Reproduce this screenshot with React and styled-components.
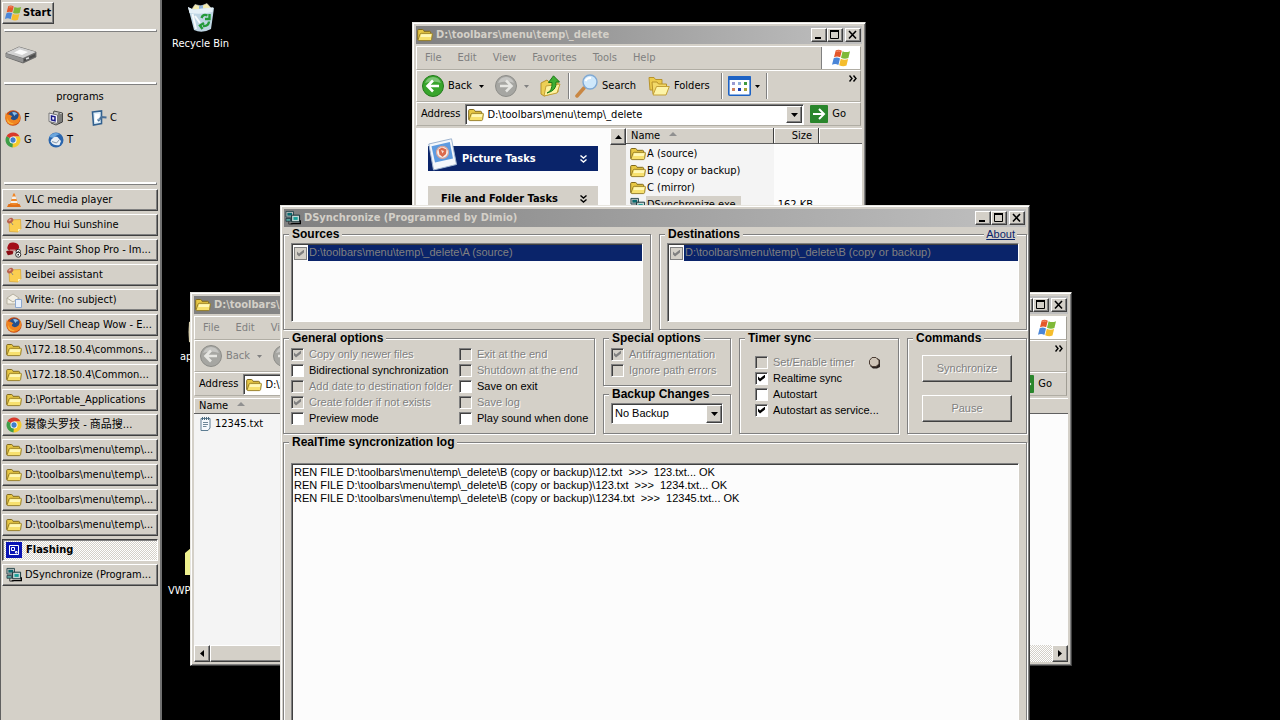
import styled, { createGlobalStyle, css } from 'styled-components';

const FACE = '#d4d0c8';
const NAVY = '#0a246a';
const UI_FONT = "Tahoma, 'DejaVu Sans Condensed', 'Noto Sans CJK SC', sans-serif";
const DIALOG_FONT = "'Liberation Sans', Arial, sans-serif";

const GlobalStyle = createGlobalStyle`
    * { box-sizing: border-box; }
    body { margin: 0; background: #000; overflow: hidden; }
    button, input, select, fieldset, legend { font: inherit; color: inherit; margin: 0; }
`;

const raised = css`
    border: 1px solid;
    border-color: #fff #404040 #404040 #fff;
    box-shadow: inset -1px -1px 0 #808080;
`;

const sunken = css`
    border: 1px solid;
    border-color: #808080 #fff #fff #808080;
    box-shadow: inset 1px 1px 0 #404040;
`;

const dither = css`
    background: repeating-conic-gradient(#fff 0 25%, ${FACE} 0 50%) 0 0 / 2px 2px;
`;

/* ---------- desktop ---------- */

const Desktop = styled.div`
    position: relative;
    display: flex;
    height: 100vh;
    overflow: hidden;
    background: #000;
    font: 11px/14px ${UI_FONT};
    color: #000;
`;

const Shortcut = styled.div`
    position: absolute;
    left: ${(p) => p.$x}px;
    top: ${(p) => p.$y}px;
    display: flex;
    flex-direction: column;
    align-items: ${(p) => p.$align || 'center'};
    gap: 4px;
    color: #fff;
    white-space: nowrap;

    svg { margin-left: ${(p) => p.$indent || 0}px; }
`;

/* ---------- taskbar ---------- */

const Taskbar = styled.aside`
    display: flex;
    flex-direction: column;
    flex: none;
    width: 162px;
    padding: 2px 2px 0 1px;
    background: ${FACE};
    border-left: 1px solid #606060;
    border-right: 2px solid #707070;
`;

const StartButton = styled.button`
    ${raised}
    display: flex;
    align-items: center;
    align-self: flex-start;
    gap: 1px;
    height: 22px;
    padding: 0 2px 0 1px;
    background: ${FACE};
    font-weight: bold;
`;

const Divider = styled.hr`
    width: 153px;
    height: 3px;
    margin: 5px 0 0 2px;
    border: 1px solid;
    border-color: #fff #808080 #808080 #fff;
    background: #fff;
`;

const DriveArea = styled.div`
    height: 45px;
    padding: 14px 0 0 3px;
`;

const Programs = styled.section`
    height: 92px;
    padding-top: 5px;
`;

const ProgramsTitle = styled.h2`
    margin: 0 0 3px;
    font: inherit;
    text-align: center;
`;

const ProgramGrid = styled.div`
    display: grid;
    grid-template-columns: 43px 43px 43px;
    padding-left: 3px;
`;

const ProgramLink = styled.a`
    display: flex;
    align-items: center;
    gap: 3px;
    height: 22px;
    color: inherit;
    text-decoration: none;
`;

const TaskList = styled.nav`
    display: flex;
    flex-direction: column;
    gap: 3px;
    margin-top: 4px;
`;

const TaskButton = styled.button`
    ${raised}
    display: flex;
    align-items: center;
    gap: 3px;
    height: 22px;
    padding: 0 3px;
    background: ${FACE};
    text-align: left;
    white-space: nowrap;
    overflow: hidden;

    svg { flex: none; }

    ${(p) => p.$active && css`
        ${dither}
        border-color: #404040 #fff #fff #404040;
        box-shadow: inset 1px 1px 0 #808080;
        font-weight: bold;
        gap: 4px;
    `}
`;

/* ---------- window chrome ---------- */

const WindowFrame = styled.section`
    position: absolute;
    left: ${(p) => p.$x}px;
    top: ${(p) => p.$y}px;
    width: ${(p) => p.$w}px;
    height: ${(p) => p.$h}px;
    display: flex;
    flex-direction: column;
    padding: 3px;
    background: ${FACE};
    border: 1px solid;
    border-color: #e8e6e0 #404040 #404040 #e8e6e0;
    box-shadow: inset 1px 1px 0 #fff, inset -1px -1px 0 #808080;
`;

const TitleBar = styled.header`
    display: flex;
    align-items: center;
    flex: none;
    gap: 3px;
    height: 18px;
    padding: 0 1px;
    background: linear-gradient(to right, #808080, #c0c0c0);
    color: ${FACE};
`;

const TitleText = styled.h1`
    flex: 1;
    margin: 0;
    font: bold 11px/14px ${UI_FONT};
    white-space: nowrap;
    overflow: hidden;
`;

const TitleButtons = styled.div`
    display: flex;

    button:last-child { margin-left: 2px; }
`;

const TitleButton = styled.button`
    ${raised}
    display: flex;
    width: 16px;
    height: 14px;
    padding: 0;
    background: ${FACE};
`;

/* ---------- explorer ---------- */

const BarStack = styled.div`
    flex: none;
    margin-top: 2px;
    padding-right: 1px;
`;

const Bar = styled.div`
    display: flex;
    align-items: center;
    height: ${(p) => p.$h}px;
    padding-left: ${(p) => p.$indent || 0}px;
    border: 1px solid;
    border-color: #fff #a09d94 #b0ada4 #fff;
`;

const MenuItems = styled.nav`
    display: flex;
    flex: 1;
    gap: 16px;
    color: #808080;
`;

const FlagBox = styled.div`
    display: flex;
    align-items: center;
    justify-content: center;
    align-self: stretch;
    width: 39px;
    background: #fff;
    border-left: 1px solid #808080;
`;

const ToolButton = styled.button`
    display: flex;
    align-items: center;
    gap: 4px;
    padding: 0;
    margin-right: ${(p) => p.$after || 0}px;
    border: 0;
    background: none;

    &:disabled { color: #808080; }
`;

const ToolArrow = styled.svg`
    margin-left: ${(p) => (p.$wide ? 3 : 0)}px;
    fill: currentColor;
`;

const ToolSplit = styled.span`
    width: 2px;
    height: 26px;
    margin-right: 5px;
    border-left: 1px solid #808080;
    border-right: 1px solid #fff;
`;

const Chevron = styled.button`
    align-self: flex-start;
    margin-left: auto;
    padding: 1px 3px 0 0;
    border: 0;
    background: none;
`;

const AddressBox = styled.div`
    ${sunken}
    display: flex;
    align-items: center;
    flex: 1;
    height: 21px;
    margin: 0 6px 0 5px;
    padding: 2px 1px 1px 2px;
    background: #fff;

    input {
        flex: 1;
        min-width: 0;
        padding: 1px 0 0 3px;
        border: 0;
        outline: 0;
        background: none;
    }
`;

const DropButton = styled.button`
    ${raised}
    display: flex;
    align-items: center;
    justify-content: center;
    width: 16px;
    height: 17px;
    padding: 0;
    background: ${FACE};
`;

const GoButton = styled.button`
    display: flex;
    align-items: center;
    gap: 4px;
    padding: 0 14px 0 0;
    border: 0;
    background: none;
`;

const ExplorerBody = styled.div`
    display: flex;
    flex: 1;
    min-height: 0;
    margin-top: 2px;
`;

const Sidebar = styled.aside`
    display: flex;
    flex-direction: column;
    gap: 15px;
    width: 194px;
    padding: 18px 12px 0;
    background: #fcfcfc;
`;

const TaskHeading = styled.h2`
    position: relative;
    display: flex;
    align-items: center;
    justify-content: space-between;
    height: 25px;
    margin: 0;
    padding: 1px 11px 0 ${(p) => (p.$primary ? 34 : 13)}px;
    background: ${(p) => (p.$primary ? NAVY : FACE)};
    color: ${(p) => (p.$primary ? '#fff' : '#000')};
    font: bold 11px/14px ${UI_FONT};
`;

const PhotoBadge = styled.span`
    position: absolute;
    left: 0;
    bottom: 0;
    display: flex;
`;

const VScroll = styled.div`
    width: 16px;
    background: ${FACE};
`;

const HScroll = styled.div`
    ${dither}
    display: flex;
    justify-content: space-between;
    flex: none;
    height: 17px;
`;

const ScrollThumb = styled.div`
    ${raised}
    width: 72%;
    margin-right: auto;
    background: ${FACE};
`;

const FileList = styled.div`
    flex: 1;
    min-width: 0;
    background: linear-gradient(to right, #f4f4f4 ${(p) => p.$name}px, #fcfcfc ${(p) => p.$name}px);
    overflow: hidden;
`;

const FileTable = styled.table`
    width: 100%;
    table-layout: fixed;
    border-collapse: separate;
    border-spacing: 0;

    th {
        height: 16px;
        padding: 1px 5px 0;
        background: ${FACE};
        border-right: 1px solid #404040;
        border-bottom: 1px solid #606060;
        box-shadow: inset 1px 1px 0 #fff;
        font-weight: normal;
        line-height: 14px;
        text-align: left;
        white-space: nowrap;
    }
    th:last-child { border-right: 0; }
    th svg { margin: 0 0 3px 9px; }
    tr:first-child td { padding-top: 1px; }
    td { padding: 0; height: 17px; white-space: nowrap; }
    th:nth-child(2), td:nth-child(2) { text-align: right; padding-right: 6px; }
`;

const FileName = styled.span`
    display: flex;
    align-items: center;
    height: 17px;
    padding-left: 4px;

    span {
        padding: 2px 5px 1px 1px;
        background: ${(p) => (p.$selected ? FACE : 'none')};
    }
`;

/* ---------- sync dialog ---------- */

const Dialog = styled.div`
    display: flex;
    flex-direction: column;
    flex: 1;
    gap: 2px;
    margin: 1px -1px 0;
    font: 11px/13px ${DIALOG_FONT};
`;

const DialogRow = styled.div`
    display: grid;
    grid-template-columns: ${(p) => p.$cols};
    gap: 8px;
`;

const Stack = styled.div`
    display: flex;
    flex-direction: column;
    gap: 2px;
`;

const Group = styled.fieldset`
    position: relative;
    min-width: 0;
    flex: ${(p) => (p.$grow ? 1 : 'none')};
    padding: 1px 7px 7px;
    border: 1px solid #808080;
    box-shadow: 1px 1px 0 #fff, inset 1px 1px 0 #fff;

    legend {
        margin-left: -2px;
        padding: 0 3px;
        background: ${FACE};
        font-weight: bold;
        font-size: 12px;
    }
`;

const AboutLink = styled.a`
    position: absolute;
    top: -13px;
    right: 9px;
    padding: 0 2px;
    background: ${FACE};
    color: ${NAVY};
`;

const PathList = styled.div`
    ${sunken}
    height: 79px;
    margin-top: 1px;
    padding: 1px 0 1px 1px;
    background: #fcfcfc;
`;

const PathItem = styled.label`
    display: flex;
    align-items: center;
    gap: 1px;
    height: 16px;
    padding-left: 1px;
    color: #808080;

    span {
        flex: 1;
        padding: 1px 1px 2px;
        background: ${NAVY};
        white-space: nowrap;
    }
`;

const Checkbox = styled.input.attrs({ type: 'checkbox' })`
    ${sunken}
    appearance: none;
    flex: none;
    width: 13px;
    height: 13px;
    background: #fff;

    &:disabled { background: ${FACE}; }

    &:checked::after {
        content: '';
        display: block;
        width: 7px;
        height: 7px;
        margin: 2px;
        background: #000;
        clip-path: polygon(0 29%, 29% 57%, 100% 0, 100% 43%, 29% 100%, 0 71%);
    }

    &:checked:disabled::after { background: #808080; }

    ${(p) => p.$flat && css`
        border-color: #808080;
        box-shadow: none;
    `}
`;

const CheckColumns = styled.div`
    display: grid;
    grid-template-columns: 168px 1fr;
`;

const CheckRow = styled.label`
    display: flex;
    align-items: center;
    gap: 5px;
    height: 16px;
    white-space: nowrap;

    ${(p) => p.$disabled && css`
        color: #808080;
        text-shadow: 1px 1px 0 #fff;
    `}
`;

const TimerBody = styled.div`
    padding: 8px 10px 0 8px;
`;

const TimerTop = styled.div`
    display: flex;
    align-items: center;
    justify-content: space-between;
`;

const SelectBox = styled.div`
    ${sunken}
    position: relative;
    display: flex;
    height: 21px;
    margin-top: 1px;
    padding: 1px;
    background: #fff;

    select {
        flex: 1;
        padding: 0 0 0 2px;
        border: 0;
        appearance: none;
        background: none;
        outline: 0;
    }
`;

const SelectArrow = styled.span`
    ${raised}
    position: absolute;
    top: 1px;
    right: 0;
    bottom: 0;
    display: flex;
    align-items: center;
    justify-content: center;
    width: 16px;
    background: ${FACE};
    pointer-events: none;
`;

const CommandColumn = styled.div`
    display: flex;
    flex-direction: column;
    gap: 13px;
    padding: 9px 7px 0;
`;

const CommandButton = styled.button`
    ${raised}
    height: 27px;
    background: ${FACE};

    &:disabled {
        color: #808080;
        text-shadow: 1px 1px 0 #fff;
    }
`;

const LogBox = styled.div`
    ${sunken}
    height: 270px;
    margin-top: 13px;
    padding: 2px;
    background: #fcfcfc;
    white-space: pre;
`;

/* ---------- icons ---------- */

const Folder = ({ size = 16 }) => (
    <svg width={size} height={size} viewBox="0 0 16 16">
        <path d="M.7 12.500V3.500Q.7 2.500 1.700 2.500H5.500Q6.300 2.500 6.600 3.500L7 4.300H12.500Q13.500 4.300 13.500 5.300V12.500Z" fill="#e8c845" stroke="#80691c" />
        <path d="M4.200 6.300H14.600Q15.500 6.300 15.400 7.200L14.600 12.500Q14.400 13.600 13.400 13.600H1.900Q.9 13.600 1.200 12.600L3 7.200Q3.300 6.300 4.200 6.300Z" fill="#f7e06e" stroke="#917820" strokeWidth=".9" />
        <path d="M4.300 7.200H14.400L13.900 10H3.400Z" fill="#fff8b8" />
    </svg>
);

const Flag = ({ size = 16 }) => (
    <svg width={size} height={size} viewBox="0 0 20 20">
        <path d="M4.700 2.600Q7.500 .8 10.800 2.800L9.200 9.300Q6.200 7.700 3 9.200Z" fill="#e5572a" />
        <path d="M11.600 3.200Q15 5 19 3.200L17.400 9.900Q13.700 11.500 10 9.700Z" fill="#7fb938" />
        <path d="M2.700 10.200Q5.700 8.700 9 10.400L7.400 16.900Q4.300 15.100 1 16.700Z" fill="#4a86d8" />
        <path d="M9.800 10.700Q13.300 12.500 17.100 11L15.500 17.600Q12 19.200 8.200 17.300Z" fill="#f5bd2c" />
        <path d="M5.500 3.500Q7.500 2.600 9.300 3.400" fill="none" stroke="#f6a184" strokeWidth=".8" />
    </svg>
);

const DownArrow = () => (
    <svg width="7" height="4" viewBox="0 0 7 4"><path d="M0 0H7L3.500 4Z" /></svg>
);

const SmallArrow = ({ wide }) => (
    <ToolArrow $wide={wide} width="5" height="3" viewBox="0 0 5 3"><path d="M0 0H5L2.500 3Z" /></ToolArrow>
);

const SortArrow = () => (
    <svg width="8" height="4" viewBox="0 0 8 4"><path d="M0 4H8L4 0Z" fill="#909090" /></svg>
);

const DoubleChevron = () => (
    <svg width="7" height="8" viewBox="0 0 7 8" fill="none" stroke="currentColor" strokeWidth="1.400">
        <path d="M.500 .500L3.500 3L6.500 .500M.500 4.500L3.500 7L6.500 4.500" />
    </svg>
);

const MoreGlyph = () => (
    <svg width="8" height="7" viewBox="0 0 8 7" fill="none" stroke="#000" strokeWidth="1.400">
        <path d="M.500 .500L3 3.500L.500 6.500M4.500 .500L7 3.500L4.500 6.500" />
    </svg>
);

const WindowGlyph = ({ kind }) => (
    <svg width="14" height="12" viewBox="0 0 14 12" fill="none" stroke="#000">
        {kind === 'min' && <path d="M3 9H9" strokeWidth="2" />}
        {kind === 'max' && <path d="M2.500 2.500H10.500V9.500H2.500Z" />}
        {kind === 'max' && <path d="M2 2H11" strokeWidth="2" />}
        {kind === 'close' && <path d="M3 2L10 9.500M10 2L3 9.500" strokeWidth="1.600" />}
    </svg>
);

const RoundArrow = ({ back, active }) => (
    <svg width="22" height="22" viewBox="0 0 22 22">
        <circle cx="11" cy="11" r="10.500" fill={active ? '#38a52c' : '#a6a6a2'} stroke={active ? '#237a1c' : '#8d8d89'} />
        <path d="M3 8 Q5 2 11 2 Q17 2 19 8 Q11 5 3 8Z" fill="#fff" opacity=".35" />
        <path
            d={back ? 'M17 11H6M11 5.500L5.500 11L11 16.500' : 'M5 11H16M11 5.500L16.500 11L11 16.500'}
            fill="none"
            stroke={active ? '#fff' : '#e6e6e2'}
            strokeWidth="2.600"
        />
    </svg>
);

const UpFolder = () => (
    <svg width="21" height="22" viewBox="0 0 21 22">
        <path d="M1 8L7 5L9 7L18 5V17L4 21L1 19Z" fill="#edcf55" stroke="#b8932a" />
        <path d="M4 21L6 11L20 9L17 18Z" fill="#fdf2a0" stroke="#c4a037" />
        <path d="M7 18Q12.500 16 12 7.500H8.500L13.500 .8L19.500 7H16Q17 15.500 7 18Z" fill="#3fae33" stroke="#1d7a18" />
    </svg>
);

const SearchIcon = () => (
    <svg width="23" height="24" viewBox="0 0 23 24">
        <path d="M2 22L9 14" stroke="#c98743" strokeWidth="3.500" strokeLinecap="round" />
        <circle cx="15" cy="8" r="7" fill="#cfe8fb" stroke="#7fa9d4" strokeWidth="1.400" />
        <path d="M10.500 7Q12 3.500 16 4" fill="none" stroke="#fff" strokeWidth="2" />
    </svg>
);

const FoldersIcon = () => (
    <svg width="22" height="20" viewBox="0 0 22 20">
        <path d="M1 1.500H6L7.500 3.500H14V14H2Z" fill="#eccb4c" stroke="#b8932a" />
        <path d="M4 6H9L10.500 8H18.500V18H5Z" fill="#f3da6a" stroke="#b8932a" />
        <path d="M8.500 10.500H21.300L18 19H5Z" fill="#fdf4a8" stroke="#c4a037" />
    </svg>
);

const ViewsIcon = () => (
    <svg width="23" height="20" viewBox="0 0 23 20">
        <rect x=".800" y=".800" width="21.400" height="18.400" rx="1" fill="#fff" stroke="#1d62c4" strokeWidth="1.600" />
        <rect width="23" height="4" rx="1" fill="#1d62c4" />
        <path d="M4 6H7V9H4Z" fill="#9a9ad0" />
        <path d="M10 6H13V9H10Z" fill="#8fb0d8" />
        <path d="M16 6H19V9H16Z" fill="#3f9a3f" />
        <path d="M4 12H7V15H4Z" fill="#d0845f" />
        <path d="M10 12H13V15H10Z" fill="#1f3fae" />
        <path d="M16 12H19V15H16Z" fill="#a8a43a" />
    </svg>
);

const GoIcon = () => (
    <svg width="18" height="18" viewBox="0 0 18 18">
        <rect width="18" height="18" rx="1" fill="#2a862c" />
        <path d="M3 9H14M9 4L14 9L9 14" fill="none" stroke="#fff" strokeWidth="2" />
    </svg>
);

const PhotoIcon = () => (
    <svg width="30" height="33" viewBox="0 0 30 33">
        <path d="M.8 6L23.500 .8L28.500 26.500L5.500 32Z" fill="#f4f7fb" stroke="#9db3cf" />
        <path d="M3.500 8.200L21.800 4L25 20.500L7 24.500Z" fill="#5e9be0" />
        <circle cx="14.500" cy="14.300" r="6" fill="#f6f2ee" stroke="#d8a49a" strokeWidth="1.200" />
        <path d="M10.500 11.500L14 9.500L18.500 11.500L18 16L14.500 19L11.500 16.500Z" fill="#dc6a4c" />
        <path d="M13 12L16 13L14.500 15.500Z" fill="#f8e4d8" />
    </svg>
);

const SyncIcon = () => (
    <svg width="16" height="16" viewBox="0 0 17 17">
        <path d="M1 1.500H9V7.500H1Z" fill="#c0c0c0" stroke="#28464c" />
        <path d="M2.500 3H7.500V6H2.500Z" fill="#0a6a6e" />
        <path d="M1 9H6V12H1Z" fill="#57a29c" stroke="#112233" strokeWidth=".7" />
        <path d="M7 5.500H15.500V12.500H7Z" fill="#c0d6d4" stroke="#102c30" />
        <path d="M9 7.500H13.500V10.500H9Z" fill="#18a098" />
        <path d="M6 14.500H16.300V11" stroke="#000" fill="none" strokeWidth="1.500" />
        <path d="M4 12V15H8" stroke="#333" fill="none" />
    </svg>
);

const TextFileIcon = () => (
    <svg width="16" height="16" viewBox="0 0 16 16">
        <path d="M3 2.500H12V12L10 14.500H3Z" fill="#f4f9fc" stroke="#5d7d92" />
        <path d="M4.500 1V4M6.500 1V4M8.500 1V4M10.500 1V4" stroke="#4d6b80" />
        <path d="M5 6.500H10M5 8.500H10M5 10.500H8.500" stroke="#6d8798" />
    </svg>
);

const Firefox = () => (
    <svg width="16" height="16" viewBox="0 0 16 16">
        <circle cx="8" cy="8" r="7.700" fill="#c9490f" />
        <circle cx="8.500" cy="6.500" r="5.300" fill="#24508c" />
        <path d="M7 2.500Q10 1 12.500 4Q10 4 9.500 6Z" fill="#8fc0e8" />
        <path d="M.8 2.500Q2 5.500 4 4.500L7.300 6.300Q5.500 7.500 6 9Q9 11.500 12.500 8.500Q14.700 5 13.500 2Q17 8 13.500 12.500Q9 16.500 4 14Q-1 10 .8 2.500Z" fill="#f08420" />
        <path d="M2 8Q4 13 9 13.500Q5 15 2.500 12Z" fill="#f8b43c" />
    </svg>
);

const Chrome = () => (
    <svg width="16" height="16" viewBox="0 0 17 17">
        <path d="M8.500 8.500L1.600 4.500A8 8 0 0 1 15.500 4.800H8.500Z" fill="#d93a2b" />
        <path d="M8.500 8.500L1.600 4.500A8 8 0 0 0 8 16.500L11.500 9.500Z" fill="#3f9d48" />
        <path d="M8.500 8.500L8 16.500A8 8 0 0 0 15.500 4.800H8.500Z" fill="#f4cb2d" />
        <circle cx="8.500" cy="8.500" r="3.800" fill="#fff" />
        <circle cx="8.500" cy="8.500" r="2.800" fill="#3f7ecc" />
    </svg>
);

const StackApp = () => (
    <svg width="16" height="16" viewBox="0 0 16 16">
        <path d="M6 1L14.500 3V12L8 15L3 13Z" fill="#c8c8c4" stroke="#4a4a4a" />
        <path d="M11 3V14M13 4V13" stroke="#333" />
        <path d="M1 3L9.500 5V13.500L1 11.500Z" fill="#f4f4fa" stroke="#777" />
        <path d="M3.500 6L7 6.800V10.800L3.500 10Z" fill="none" stroke="#1b1b88" strokeWidth="1.500" />
    </svg>
);

const Clip = () => (
    <svg width="16" height="16" viewBox="0 0 16 16">
        <path d="M1.500 2L10.500 1V13.500L2.500 15Z" fill="#dfeffa" stroke="#33618f" strokeWidth="1.600" />
        <path d="M4 4H8.500V11.500L4 12Z" fill="#fff" />
        <path d="M7 11L10.500 7L15.500 7.500" fill="none" stroke="#4a7098" strokeWidth="2" />
        <path d="M6 9.500L9 9" stroke="#8fb0cc" />
    </svg>
);

const Thunderbird = () => (
    <svg width="16" height="16" viewBox="0 0 16 16">
        <circle cx="8" cy="8" r="7.500" fill="#2a65ad" />
        <path d="M1 5Q5 -1 12 2Q8 3 6 6Z" fill="#6ba6dd" />
        <path d="M2.500 9.500Q5 4 9.500 5L13 9L11.500 13Q6 14.500 2.500 9.500Z" fill="#e9eff5" />
        <path d="M4 9.500L8.500 11L11.500 7.500" fill="none" stroke="#8899aa" />
    </svg>
);

const Drive = () => (
    <svg width="32" height="18" viewBox="0 0 32 18">
        <path d="M1 7L14 1L31 6V11L18 17L1 11Z" fill="#6d6d6d" stroke="#555" strokeWidth=".7" />
        <path d="M1 7L14 1L31 6L18 12Z" fill="#d2d2d2" />
        <path d="M9 6.500L15 3.500L23 6L17 9Z" fill="#fbfbfb" />
        <path d="M1 7.500L18 12.500V16.500L1 11Z" fill="#949494" />
        <path d="M19 13L30 8V10.500L19 15.500Z" fill="#4c4c4c" />
        <path d="M21 13L24 11.700" stroke="#ddd" strokeWidth="1.500" />
    </svg>
);

const Vlc = () => (
    <svg width="16" height="16" viewBox="0 0 16 16">
        <path d="M2.500 12H13.500L15 15H1Z" fill="#e07018" />
        <path d="M7.300 1.500H8.700L12 12Q8 14 4 12Z" fill="#f08828" />
        <path d="M6.400 4.500H9.600L10.400 7H5.600ZM4.900 9H11.100L11.700 11H4.300Z" fill="#f3f0ec" />
    </svg>
);

const NoteIcon = () => (
    <svg width="16" height="16" viewBox="0 0 16 16">
        <path d="M3 3L14.500 2.500L15 12L12 15L3.500 14.500Z" fill="#fbce50" stroke="#d9a52f" strokeWidth=".7" />
        <path d="M12 15V12L15 12Z" fill="#fff1b8" />
        <path d="M5 5L7 8" stroke="#888" />
        <ellipse cx="4.200" cy="3.600" rx="3.400" ry="2.400" fill="#b8604c" transform="rotate(-35 4.200 3.600)" />
        <ellipse cx="4" cy="3" rx="1.500" ry=".8" fill="#e0a498" transform="rotate(-35 4 3)" />
    </svg>
);

const PaintShop = () => (
    <svg width="16" height="16" viewBox="0 0 17 17">
        <path d="M2 4Q3 0 8 .500Q14 1 14 6L12 9H4Q0 8 2 4Z" fill="#a30f18" />
        <path d="M0 10Q3 8 8 10L7 13L2 14Z" fill="#8a0c14" />
        <path d="M4 8.500H10" stroke="#e0b0b0" strokeWidth=".8" />
        <circle cx="13" cy="10" r="2.300" fill="#fff" stroke="#222" />
        <circle cx="13" cy="13.500" r="2.700" fill="#fff" stroke="#222" />
        <circle cx="13" cy="13.500" r=".900" fill="#222" />
        <circle cx="13" cy="10" r=".700" fill="#222" />
    </svg>
);

const MailIcon = () => (
    <svg width="16" height="16" viewBox="0 0 16 16">
        <path d="M1 6L7 2L13 6V12H1Z" fill="#f3f0e6" stroke="#b5b0a0" />
        <path d="M1 6L7 10L13 6" fill="none" stroke="#b5b0a0" />
        <path d="M9.500 7.500H15.500V15.500H9.500Z" fill="#e9f1fc" stroke="#8ca8d0" />
    </svg>
);

const FlashIcon = () => (
    <svg width="16" height="16" viewBox="0 0 16 16">
        <rect width="16" height="16" fill="#0a14b4" />
        <path d="M3.500 3.500H12.500V12.500H3.500Z" fill="none" stroke="#fff" />
        <path d="M5.500 5.500H8.500V8.500H5.500ZM9.500 9.500H11V11H9.500Z" fill="none" stroke="#fff" />
    </svg>
);

const RecycleBin = () => (
    <svg width="28" height="30" viewBox="0 0 28 30">
        <path d="M5 6L8 1.500L14 3L20 .500L24 5V10H5Z" fill="#f4ecb0" stroke="#ccc" strokeWidth=".6" />
        <path d="M12 3L16 2V8H12Z" fill="#8fb4dc" />
        <path d="M1 4L6 6.500L26 4.500L27 5L24 26Q15 31 7 27Z" fill="#bfd6e4" />
        <path d="M1 4L6 6.500L26 4.500L25.500 9Q14 12 2.500 10Z" fill="#e4f0f7" />
        <path d="M5.500 11L9 26M8 13L13 20" stroke="#f6fafc" strokeWidth="2" />
        <path d="M14.500 15Q16 10.500 20.500 12.500M22.500 11V16H18M22 18.500Q21.500 23.500 16 23M15.500 26L13 22.500L17 20" fill="none" stroke="#259a3a" strokeWidth="2.400" />
    </svg>
);

const TimerKnob = () => (
    <svg width="13" height="13" viewBox="0 0 13 13">
        <path d="M9 2L12 4V11L9 12.500H5L2 10Z" fill="#2b2320" />
        <path d="M4 1.500H8L11 4.500V8L8 10.500H4L1.500 8V4.500Z" fill="#cfc5b8" stroke="#4b3d34" />
    </svg>
);

/* ---------- data ---------- */

const programs = [
    { name: 'F', icon: <Firefox /> },
    { name: 'S', icon: <StackApp /> },
    { name: 'C', icon: <Clip /> },
    { name: 'G', icon: <Chrome /> },
    { name: 'T', icon: <Thunderbird /> }
];

const tasks = [
    { title: 'VLC media player', icon: <Vlc /> },
    { title: 'Zhou Hui Sunshine', icon: <NoteIcon /> },
    { title: 'Jasc Paint Shop Pro - Im...', icon: <PaintShop /> },
    { title: 'beibei assistant', icon: <NoteIcon /> },
    { title: 'Write: (no subject)', icon: <MailIcon /> },
    { title: 'Buy/Sell Cheap Wow - E...', icon: <Firefox /> },
    { title: '\\\\172.18.50.4\\commons...', icon: <Folder /> },
    { title: '\\\\172.18.50.4\\Common...', icon: <Folder /> },
    { title: 'D:\\Portable_Applications', icon: <Folder /> },
    { title: '摄像头罗技 - 商品搜...', icon: <Chrome /> },
    { title: 'D:\\toolbars\\menu\\temp\\...', icon: <Folder /> },
    { title: 'D:\\toolbars\\menu\\temp\\...', icon: <Folder /> },
    { title: 'D:\\toolbars\\menu\\temp\\...', icon: <Folder /> },
    { title: 'D:\\toolbars\\menu\\temp\\...', icon: <Folder /> },
    { title: 'Flashing', icon: <FlashIcon />, active: true },
    { title: 'DSynchronize (Program...', icon: <SyncIcon /> }
];

const menuItems = ['File', 'Edit', 'View', 'Favorites', 'Tools', 'Help'];

const sourceFiles = [
    { name: 'A (source)', icon: <Folder /> },
    { name: 'B (copy or backup)', icon: <Folder /> },
    { name: 'C (mirror)', icon: <Folder /> },
    { name: 'DSynchronize.exe', size: '162 KB', icon: <SyncIcon />, selected: true }
];

const mirrorFiles = [{ name: '12345.txt', icon: <TextFileIcon /> }];

const generalLeft = [
    { label: 'Copy only newer files', checked: true, disabled: true },
    { label: 'Bidirectional synchronization' },
    { label: 'Add date to destination folder', disabled: true },
    { label: 'Create folder if not exists', checked: true, disabled: true },
    { label: 'Preview mode' }
];

const generalRight = [
    { label: 'Exit at the end', disabled: true },
    { label: 'Shutdown at the end', disabled: true },
    { label: 'Save on exit' },
    { label: 'Save log', disabled: true },
    { label: 'Play sound when done' }
];

const special = [
    { label: 'Antifragmentation', checked: true, disabled: true },
    { label: 'Ignore path errors', disabled: true }
];

const timer = [
    { label: 'Realtime sync', checked: true },
    { label: 'Autostart' },
    { label: 'Autostart as service...', checked: true }
];

const logLines = [
    'REN FILE D:\\toolbars\\menu\\temp\\_delete\\B (copy or backup)\\12.txt  >>>  123.txt... OK',
    'REN FILE D:\\toolbars\\menu\\temp\\_delete\\B (copy or backup)\\123.txt  >>>  1234.txt... OK',
    'REN FILE D:\\toolbars\\menu\\temp\\_delete\\B (copy or backup)\\1234.txt  >>>  12345.txt... OK'
];

/* ---------- components ---------- */

const Check = ({ label, checked, disabled }) => (
    <CheckRow $disabled={disabled}>
        <Checkbox defaultChecked={checked} disabled={disabled} />
        {label}
    </CheckRow>
);

const CheckList = ({ items }) => (
    <div>
        {items.map((item) => <Check key={item.label} {...item} />)}
    </div>
);

const Title = ({ icon, children }) => (
    <TitleBar>
        {icon}
        <TitleText>{children}</TitleText>
        <TitleButtons>
            <TitleButton aria-label="Minimize"><WindowGlyph kind="min" /></TitleButton>
            <TitleButton aria-label="Maximize"><WindowGlyph kind="max" /></TitleButton>
            <TitleButton aria-label="Close"><WindowGlyph kind="close" /></TitleButton>
        </TitleButtons>
    </TitleBar>
);

const Explorer = (props) => {
    const {
        frame,
        files = [],
        nameWidth,
        canGoBack,
        tasksPane,
        scrollable
    } = props;

    return (
        <WindowFrame {...frame}>
            <Title icon={<Folder />}>D:\toolbars\menu\temp\_delete</Title>
            <BarStack>
                <Bar $h={24} $indent={8}>
                    <MenuItems>
                        {menuItems.map((item) => <span key={item}>{item}</span>)}
                    </MenuItems>
                    <FlagBox><Flag size={20} /></FlagBox>
                </Bar>
                <Bar $h={32} $indent={5}>
                    <ToolButton disabled={!canGoBack} $after={11}>
                        <RoundArrow back active={canGoBack} />
                        Back
                        <SmallArrow wide />
                    </ToolButton>
                    <ToolButton disabled aria-label="Forward" $after={11}>
                        <RoundArrow />
                        <SmallArrow wide />
                    </ToolButton>
                    <ToolButton aria-label="Up" $after={7}><UpFolder /></ToolButton>
                    <ToolSplit />
                    <ToolButton $after={12}><SearchIcon />Search</ToolButton>
                    <ToolButton $after={11}><FoldersIcon />Folders</ToolButton>
                    <ToolSplit />
                    <ToolButton aria-label="Views" $after={6}><ViewsIcon /><SmallArrow /></ToolButton>
                    <ToolSplit />
                    <Chevron aria-label="More"><MoreGlyph /></Chevron>
                </Bar>
                <Bar $h={24} $indent={4} as="label">
                    Address
                    <AddressBox>
                        <Folder />
                        <input defaultValue="D:\toolbars\menu\temp\_delete" />
                        <DropButton aria-label="Addresses"><DownArrow /></DropButton>
                    </AddressBox>
                    <GoButton><GoIcon />Go</GoButton>
                </Bar>
            </BarStack>
            <ExplorerBody>
                {tasksPane}
                <FileList $name={nameWidth}>
                    <FileTable>
                        <colgroup>
                            <col style={{ width: nameWidth }} />
                            <col style={{ width: 45 }} />
                            <col />
                        </colgroup>
                        <thead>
                            <tr>
                                <th>Name<SortArrow /></th>
                                <th>Size</th>
                                <th />
                            </tr>
                        </thead>
                        <tbody>
                            {files.map((file) => (
                                <tr key={file.name}>
                                    <td>
                                        <FileName $selected={file.selected}>
                                            {file.icon}
                                            <span>{file.name}</span>
                                        </FileName>
                                    </td>
                                    <td>{file.size}</td>
                                    <td />
                                </tr>
                            ))}
                        </tbody>
                    </FileTable>
                </FileList>
            </ExplorerBody>
            {scrollable && (
                <HScroll>
                    <DropButton aria-label="Scroll left">
                        <svg width="4" height="7" viewBox="0 0 4 7"><path d="M4 0V7L0 3.500Z" /></svg>
                    </DropButton>
                    <ScrollThumb />
                    <DropButton aria-label="Scroll right">
                        <svg width="4" height="7" viewBox="0 0 4 7"><path d="M0 0V7L4 3.500Z" /></svg>
                    </DropButton>
                </HScroll>
            )}
        </WindowFrame>
    );
};

const PictureTasks = () => (
    <>
        <Sidebar>
            <TaskHeading $primary>
                <PhotoBadge><PhotoIcon /></PhotoBadge>
                Picture Tasks
                <DoubleChevron />
            </TaskHeading>
            <TaskHeading>
                File and Folder Tasks
                <DoubleChevron />
            </TaskHeading>
        </Sidebar>
        <VScroll>
            <DropButton aria-label="Scroll up">
                <svg width="7" height="4" viewBox="0 0 7 4"><path d="M0 4H7L3.500 0Z" /></svg>
            </DropButton>
        </VScroll>
    </>
);

const PathGroup = ({ title, path, children }) => (
    <Group>
        <legend>{title}</legend>
        {children}
        <PathList>
            <PathItem>
                <Checkbox $flat defaultChecked disabled />
                <span>{path}</span>
            </PathItem>
        </PathList>
    </Group>
);

const SyncWindow = () => (
    <WindowFrame $x={280} $y={205} $w={750} $h={540}>
        <Title icon={<SyncIcon />}>DSynchronize (Programmed by Dimio)</Title>
        <Dialog>
            <DialogRow $cols="1fr 1fr">
                <PathGroup title="Sources" path="D:\toolbars\menu\temp\_delete\A (source)" />
                <PathGroup title="Destinations" path="D:\toolbars\menu\temp\_delete\B (copy or backup)">
                    <AboutLink href="#about">About</AboutLink>
                </PathGroup>
            </DialogRow>
            <DialogRow $cols="312fr 128fr 160fr 120fr">
                <Group>
                    <legend>General options</legend>
                    <CheckColumns>
                        <CheckList items={generalLeft} />
                        <CheckList items={generalRight} />
                    </CheckColumns>
                </Group>
                <Stack>
                    <Group>
                        <legend>Special options</legend>
                        <CheckList items={special} />
                    </Group>
                    <Group $grow>
                        <legend>Backup Changes</legend>
                        <SelectBox>
                            <select aria-label="Backup Changes">
                                <option>No Backup</option>
                            </select>
                            <SelectArrow><DownArrow /></SelectArrow>
                        </SelectBox>
                    </Group>
                </Stack>
                <Group>
                    <legend>Timer sync</legend>
                    <TimerBody>
                        <TimerTop>
                            <Check label="Set/Enable timer" disabled />
                            <TimerKnob />
                        </TimerTop>
                        <CheckList items={timer} />
                    </TimerBody>
                </Group>
                <Group>
                    <legend>Commands</legend>
                    <CommandColumn>
                        <CommandButton disabled>Synchronize</CommandButton>
                        <CommandButton disabled>Pause</CommandButton>
                    </CommandColumn>
                </Group>
            </DialogRow>
            <Group $grow>
                <legend>RealTime syncronization log</legend>
                <LogBox>
                    {logLines.map((line) => <div key={line}>{line}</div>)}
                </LogBox>
            </Group>
        </Dialog>
    </WindowFrame>
);

const App = () => (
    <>
        <GlobalStyle />
        <Desktop>
            <Taskbar>
                <StartButton><Flag size={18} />Start</StartButton>
                <Divider />
                <DriveArea><Drive /></DriveArea>
                <Divider />
                <Programs>
                    <ProgramsTitle>programs</ProgramsTitle>
                    <ProgramGrid>
                        {programs.map((program) => (
                            <ProgramLink key={program.name} href="#run">
                                {program.icon}
                                {program.name}
                            </ProgramLink>
                        ))}
                    </ProgramGrid>
                </Programs>
                <Divider />
                <TaskList>
                    {tasks.map((task, index) => (
                        <TaskButton key={index} $active={task.active}>
                            {task.icon}
                            {task.title}
                        </TaskButton>
                    ))}
                </TaskList>
            </Taskbar>

            <Shortcut $x={172} $y={3}>
                <RecycleBin />
                Recycle Bin
            </Shortcut>
            <Shortcut $x={180} $y={318} $align="flex-start" $indent={8}>
                <svg width="12" height="28" viewBox="0 0 12 28"><path d="M1 4Q0 14 1 24L12 28V0Z" fill="#d8cfae" /></svg>
                ap
            </Shortcut>
            <Shortcut $x={168} $y={548} $align="flex-start" $indent={17}>
                <svg width="20" height="32" viewBox="0 0 20 32"><path d="M0 5L6 0H20V27H0Z" fill="#eef08e" /></svg>
                VWP
            </Shortcut>

            <Explorer
                frame={{ $x: 412, $y: 22, $w: 454, $h: 400 }}
                files={sourceFiles}
                nameWidth={148}
                canGoBack
                tasksPane={<PictureTasks />}
            />
            <Explorer
                frame={{ $x: 190, $y: 292, $w: 882, $h: 374 }}
                files={mirrorFiles}
                nameWidth={147}
                scrollable
            />
            <SyncWindow />
        </Desktop>
    </>
);

export default App;
